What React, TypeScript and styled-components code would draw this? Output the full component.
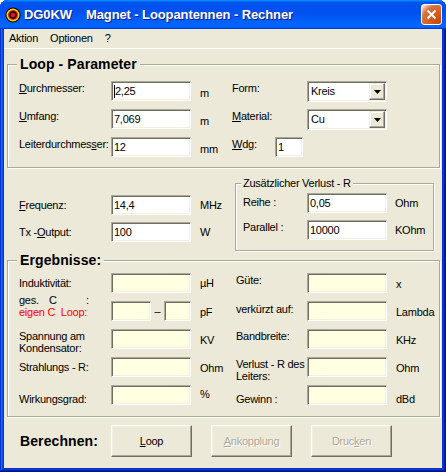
import React from 'react'
import styled, { createGlobalStyle } from 'styled-components'

const GlobalStyle = createGlobalStyle`
  html, body {
    margin: 0;
    padding: 0;
    background: #ffffff;
  }
  body {
    font-family: "Liberation Sans", Arial, sans-serif;
    font-size: 11px;
    letter-spacing: -0.25px;
    color: #000000;
  }
  * {
    box-sizing: border-box;
  }
`

//Window frame
const Window = styled.div`
  width: 446px;
  height: 472px;
  display: flex;
  flex-direction: column;
  padding: 0 4px 4px;
  background: #0831d9;
  border-radius: 8px 8px 0 0;
  overflow: hidden;
  box-shadow: inset -1px -1px #00138c, inset 1px 1px #0831d9,
    inset -2px -2px #001ea0, inset 2px 2px #166aee, inset -3px -3px #003bda,
    inset 3px 3px #0855dd;
`
const TitleBar = styled.div`
  height: 29px;
  margin: 0 -4px;
  padding: 0 4px 0 5px;
  display: flex;
  align-items: center;
  flex: none;
  background: linear-gradient(
    180deg,
    #0997ff,
    #0053ee 8%,
    #0050ee 40%,
    #06f 88%,
    #06f 93%,
    #005bff 95%,
    #003dd7 96%,
    #003dd7
  );
`
const TitleText = styled.div`
  flex: 1;
  margin-left: 3px;
  color: #ffffff;
  font: bold 13px 'Liberation Sans', Arial, sans-serif;
  letter-spacing: -0.1px;
  text-shadow: 1px 1px 0 #0a1e8a;
  white-space: pre;
`
const CloseBtn = styled.div`
  width: 21px;
  height: 21px;
  display: grid;
  place-items: center;
  border: 1px solid #ffffff;
  border-radius: 3px;
  background: radial-gradient(
    circle at 90% 90%,
    #cc4600 0%,
    #dc6527 55%,
    #cd7546 70%,
    #ffccb2 90%,
    #ffffff 100%
  );
`
const MenuBar = styled.div`
  height: 20px;
  flex: none;
  display: flex;
  align-items: center;
  gap: 12px;
  padding: 0 0 1px 5px;
  background: #ece9d8;
  border-bottom: 1px solid #ffffff;
`
const Client = styled.div`
  flex: 1;
  display: flex;
  flex-direction: column;
  padding: 15px 2px 0 3px;
  background: #ece9d8;
`

//Group boxes
const GroupBox = styled.div<{ $h: number; $pt: number }>`
  position: relative;
  height: ${(p) => p.$h}px;
  flex: none;
  padding: ${(p) => p.$pt}px 0 0 11px;
  border: 1px solid #aca899;
  box-shadow: inset 1px 1px 0 #ffffff, 1px 1px 0 #ffffff;
`
const GroupTitle = styled.div`
  position: absolute;
  top: -9px;
  left: 9px;
  padding: 0 3px;
  background: #ece9d8;
  font: bold 14px 'Liberation Sans', Arial, sans-serif;
  letter-spacing: 0.1px;
  line-height: 16px;
`
const SubGroup = styled.div`
  position: relative;
  height: 68px;
  margin-top: 15px;
  padding: 9px 0 0 7px;
  border: 1px solid #aca899;
  box-shadow: inset 1px 1px 0 #ffffff, 1px 1px 0 #ffffff;
`
const SubTitle = styled.div`
  position: absolute;
  top: -7px;
  left: 5px;
  padding: 0 2px;
  background: #ece9d8;
  line-height: 13px;
`
const Halves = styled.div<{ $left: number }>`
  display: grid;
  grid-template-columns: ${(p) => p.$left}px 1fr;
`
const Stack = styled.div<{ $gap: number; $pt?: number }>`
  display: flex;
  flex-direction: column;
  gap: ${(p) => p.$gap}px;
  padding-top: ${(p) => p.$pt ?? 0}px;
`
const Middle = styled.div`
  height: 92px;
  flex: none;
  display: grid;
  grid-template-columns: 216px 199px;
  padding-left: 12px;
`

//Fields
const Row = styled.div`
  height: 20px;
  display: flex;
  align-items: flex-start;
`
const Label = styled.div<{ $w: number; $dy?: number; $lh?: number }>`
  width: ${(p) => p.$w}px;
  flex: none;
  margin-top: ${(p) => p.$dy ?? 0}px;
  line-height: ${(p) => p.$lh ?? 13}px;
  white-space: pre;
`
const RedLine = styled.div`
  color: #ff0000;
`
const Cell = styled.span<{ $w: number }>`
  display: inline-block;
  width: ${(p) => p.$w}px;
`
const Unit = styled.div<{ $ml?: number; $dy?: number }>`
  margin-left: ${(p) => p.$ml ?? 9}px;
  margin-top: ${(p) => p.$dy ?? 5}px;
  line-height: 13px;
  white-space: pre;
`
const Key = styled.span`
  text-decoration: underline;
  text-underline-offset: 1px;
`
const TextBox = styled.div<{ $w: number; $info?: boolean }>`
  width: ${(p) => p.$w}px;
  height: 20px;
  flex: none;
  display: flex;
  align-items: center;
  padding: 0 2px;
  border: 1px solid;
  border-color: #aca899 #ffffff #ffffff #aca899;
  box-shadow: inset 1px 1px 0 #716f64, inset -1px -1px 0 #f1efe2;
  background: ${(p) => (p.$info ? '#ffffe1' : '#ffffff')};
  line-height: 13px;
`
const Caret = styled.span`
  width: 1px;
  height: 13px;
  background: #000000;
`
const Dash = styled.div`
  width: 13px;
  flex: none;
  text-align: center;
  line-height: 13px;
  margin-top: 4px;
`
const Combo = styled.div`
  width: 80px;
  height: 21px;
  flex: none;
  display: flex;
  padding: 1px;
  border: 1px solid;
  border-color: #aca899 #ffffff #ffffff #aca899;
  box-shadow: inset 1px 1px 0 #716f64, inset -1px -1px 0 #f1efe2;
  background: #ffffff;
`
const ComboText = styled.div`
  flex: 1;
  padding-left: 2px;
  line-height: 17px;
`
const DropBtn = styled.div`
  width: 16px;
  height: 17px;
  display: grid;
  place-items: center;
  background: #ece9d8;
  border: 1px solid;
  border-color: #f1efe2 #716f64 #716f64 #f1efe2;
  box-shadow: inset -1px -1px 0 #aca899, inset 1px 1px 0 #ffffff;
`

//Bottom row
const Bottom = styled.div`
  display: flex;
  align-items: center;
  gap: 19px;
  margin-top: 8px;
  padding-left: 13px;
`
const BigLabel = styled.div`
  width: 72px;
  font: bold 14px 'Liberation Sans', Arial, sans-serif;
  letter-spacing: 0.1px;
`
const Button = styled.button`
  width: 81px;
  height: 32px;
  padding: 0;
  background: #ece9d8;
  border: 1px solid;
  border-color: #ffffff #716f64 #716f64 #ffffff;
  box-shadow: inset -1px -1px 0 #aca899, inset 1px 1px 0 #f1efe2;
  font: 11px 'Liberation Sans', Arial, sans-serif;
  letter-spacing: -0.25px;
  color: #000000;

  &:disabled {
    color: #aca899;
    text-shadow: 1px 1px 0 #ffffff;
  }
`

const AppIcon = () => (
  <svg width='16' height='16' viewBox='0 0 16 16'>
    <circle cx='8' cy='8' r='7.5' fill='#000' />
    <circle cx='8' cy='8' r='6.5' fill='#ffd800' />
    <circle cx='8' cy='8' r='5' fill='#e8141c' />
    <circle cx='8' cy='8' r='3' fill='none' stroke='#000' strokeWidth='1.3' />
    <circle cx='8' cy='8' r='1.6' fill='#e8141c' />
  </svg>
)

const CloseIcon = () => (
  <svg width='11' height='11' viewBox='0 0 11 11'>
    <path d='M1.5 1.5 L9.5 9.5 M9.5 1.5 L1.5 9.5' stroke='#fff' strokeWidth='2' />
  </svg>
)

const Arrow = () => (
  <svg width='7' height='4' viewBox='0 0 7 4'>
    <polygon points='0,0 7,0 3.5,4' fill='#000' />
  </svg>
)

interface ResultRow {
  label: string
  dy: number
  unit: string
  unitDy: number
}

const leftResults: ResultRow[] = [
  { label: 'Spannung am\nKondensator:', dy: 1, unit: 'KV', unitDy: 5 },
  { label: 'Strahlungs - R:', dy: 4, unit: 'Ohm', unitDy: 5 },
  { label: 'Wirkungsgrad:', dy: 8, unit: '%', unitDy: 3 },
]

const rightResults: ResultRow[] = [
  { label: 'Güte:', dy: 1, unit: 'x', unitDy: 5 },
  { label: 'verkürzt auf:', dy: 2, unit: 'Lambda', unitDy: 5 },
  { label: 'Bandbreite:', dy: 1, unit: 'KHz', unitDy: 5 },
  { label: 'Verlust - R des\nLeiters:', dy: 1, unit: 'Ohm', unitDy: 5 },
  { label: 'Gewinn :', dy: 8, unit: 'dBd', unitDy: 8 },
]

const App = () => {
  return (
    <>
      <GlobalStyle />
      <Window>
        <TitleBar>
          <AppIcon />
          <TitleText>{'DG0KW    Magnet - Loopantennen - Rechner'}</TitleText>
          <CloseBtn>
            <CloseIcon />
          </CloseBtn>
        </TitleBar>
        <MenuBar>
          <span>Aktion</span>
          <span>Optionen</span>
          <span>?</span>
        </MenuBar>

        <Client>
          {/* Loop - Parameter */}
          <GroupBox $h={104} $pt={16}>
            <GroupTitle>Loop - Parameter</GroupTitle>
            <Halves $left={213}>
              <Stack $gap={8}>
                <Row>
                  <Label $w={92} $dy={1}>
                    <Key>D</Key>urchmesser:
                  </Label>
                  <TextBox $w={80}>
                    <Caret />
                    2,25
                  </TextBox>
                  <Unit $dy={6}>m</Unit>
                </Row>
                <Row>
                  <Label $w={92} $dy={1}>
                    <Key>U</Key>mfang:
                  </Label>
                  <TextBox $w={80}>7,069</TextBox>
                  <Unit $dy={6}>m</Unit>
                </Row>
                <Row>
                  <Label $w={92} $dy={1}>
                    Leiterdurchmes<Key>s</Key>er:
                  </Label>
                  <TextBox $w={80}>12</TextBox>
                  <Unit $dy={6}>mm</Unit>
                </Row>
              </Stack>
              <Stack $gap={8}>
                <Row>
                  <Label $w={75} $dy={1}>
                    Form:
                  </Label>
                  <Combo>
                    <ComboText>Kreis</ComboText>
                    <DropBtn>
                      <Arrow />
                    </DropBtn>
                  </Combo>
                </Row>
                <Row>
                  <Label $w={75} $dy={1}>
                    <Key>M</Key>aterial:
                  </Label>
                  <Combo>
                    <ComboText>Cu</ComboText>
                    <DropBtn>
                      <Arrow />
                    </DropBtn>
                  </Combo>
                </Row>
                <Row>
                  <Label $w={43} $dy={1}>
                    <Key>W</Key>dg:
                  </Label>
                  <TextBox $w={28}>1</TextBox>
                </Row>
              </Stack>
            </Halves>
          </GroupBox>

          {/* Frequency and extra loss */}
          <Middle>
            <Stack $gap={7} $pt={27}>
              <Row>
                <Label $w={92} $dy={4}>
                  <Key>F</Key>requenz:
                </Label>
                <TextBox $w={80}>14,4</TextBox>
                <Unit $dy={4}>MHz</Unit>
              </Row>
              <Row>
                <Label $w={92} $dy={4}>
                  Tx -<Key>O</Key>utput:
                </Label>
                <TextBox $w={80}>100</TextBox>
                <Unit $dy={4}>W</Unit>
              </Row>
            </Stack>
            <SubGroup>
              <SubTitle>Zusätzlicher Verlust - R</SubTitle>
              <Stack $gap={7}>
                <Row>
                  <Label $w={64} $dy={3}>
                    Reihe :
                  </Label>
                  <TextBox $w={80}>0,05</TextBox>
                  <Unit $ml={8} $dy={4}>
                    Ohm
                  </Unit>
                </Row>
                <Row>
                  <Label $w={64} $dy={1}>
                    Parallel :
                  </Label>
                  <TextBox $w={80}>10000</TextBox>
                  <Unit $ml={8} $dy={4}>
                    KOhm
                  </Unit>
                </Row>
              </Stack>
            </SubGroup>
          </Middle>

          {/* Ergebnisse */}
          <GroupBox $h={157} $pt={12}>
            <GroupTitle>Ergebnisse:</GroupTitle>
            <Halves $left={217}>
              <Stack $gap={8}>
                <Row>
                  <Label $w={92} $dy={4}>
                    Induktivität:
                  </Label>
                  <TextBox $w={80} $info />
                  <Unit $dy={4}>µH</Unit>
                </Row>
                <Row>
                  <Label $w={92} $dy={-7} $lh={12}>
                    <div>
                      <Cell $w={30}>ges.</Cell>
                      <Cell $w={37}>C</Cell>:
                    </div>
                    <RedLine>{'eigen C  Loop:'}</RedLine>
                  </Label>
                  <TextBox $w={40} $info />
                  <Dash>–</Dash>
                  <TextBox $w={27} $info />
                  <Unit $dy={5}>pF</Unit>
                </Row>
                {leftResults.map((r) => (
                  <Row key={r.unit}>
                    <Label $w={92} $dy={r.dy} $lh={12}>
                      {r.label}
                    </Label>
                    <TextBox $w={80} $info />
                    <Unit $dy={r.unitDy}>{r.unit}</Unit>
                  </Row>
                ))}
              </Stack>
              <Stack $gap={8}>
                {rightResults.map((r) => (
                  <Row key={r.unit + r.dy}>
                    <Label $w={71} $dy={r.dy} $lh={12}>
                      {r.label}
                    </Label>
                    <TextBox $w={80} $info />
                    <Unit $dy={r.unitDy}>{r.unit}</Unit>
                  </Row>
                ))}
              </Stack>
            </Halves>
          </GroupBox>

          <Bottom>
            <BigLabel>Berechnen:</BigLabel>
            <Button>
              <Key>L</Key>oop
            </Button>
            <Button disabled>
              <Key>A</Key>nkopplung
            </Button>
            <Button disabled>
              Druc<Key>k</Key>en
            </Button>
          </Bottom>
        </Client>
      </Window>
    </>
  )
}

export default App
